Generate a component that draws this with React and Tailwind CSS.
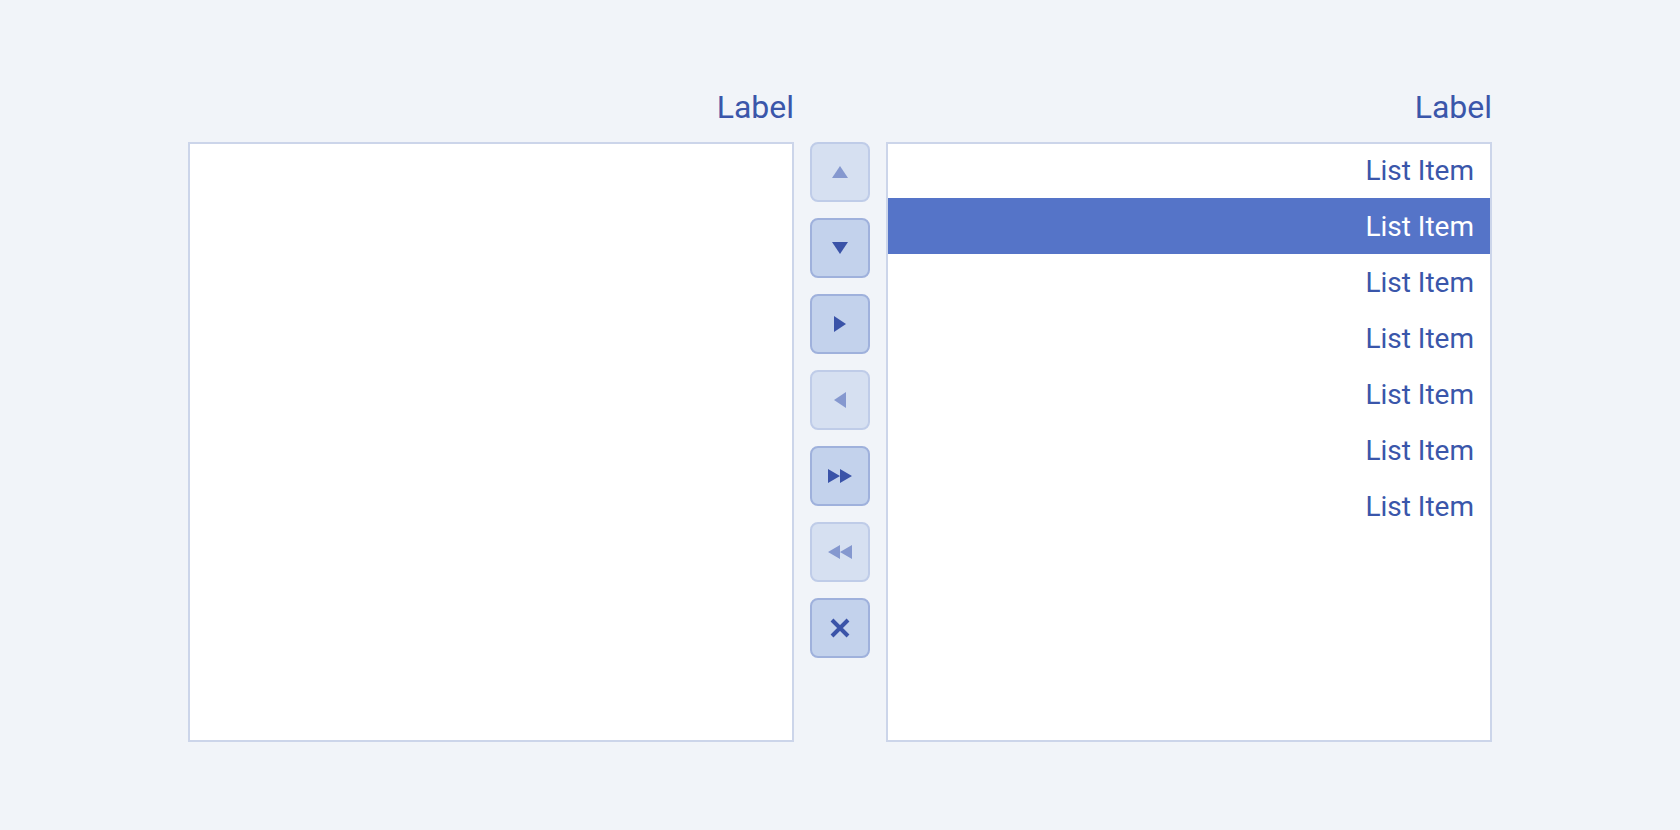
import React from "react";

const items = ["List Item", "List Item", "List Item", "List Item", "List Item", "List Item", "List Item"];

function Btn({ disabled, children }) {
  return (
    <button
      className={
        disabled
          ? "w-[60px] h-[60px] rounded-lg border-2 border-[#bfcce8] bg-[#d6e0f1] text-[#8598cf] flex items-center justify-center"
          : "w-[60px] h-[60px] rounded-lg border-2 border-[#9fb1dc] bg-[#c3d2ec] text-[#3a53a8] flex items-center justify-center"
      }
    >
      {children}
    </button>
  );
}

export default function App() {
  return (
    <div
      className="min-h-screen w-full bg-[#f1f4f9] flex items-start justify-center pt-[87px]"
      style={{ fontFamily: "Roboto, 'Liberation Sans', sans-serif" }}
    >
      <div className="grid grid-cols-[606px_60px_606px] gap-x-4 content-start">
        <div className="text-right text-[32px] leading-10 text-[#3a56aa] mb-[15px]">Label</div>
        <div />
        <div className="text-right text-[32px] leading-10 text-[#3a56aa] mb-[15px]">Label</div>

        <div className="h-[600px] border-2 border-[#ccd5ea] bg-white" />

        <div className="flex flex-col gap-4">
          <Btn disabled>
            <svg width="16" height="12" viewBox="0 0 16 12"><path d="M8 0 L16 12 L0 12 Z" fill="currentColor" /></svg>
          </Btn>
          <Btn>
            <svg width="16" height="12" viewBox="0 0 16 12"><path d="M0 0 L16 0 L8 12 Z" fill="currentColor" /></svg>
          </Btn>
          <Btn>
            <svg width="12" height="16" viewBox="0 0 12 16"><path d="M0 0 L12 8 L0 16 Z" fill="currentColor" /></svg>
          </Btn>
          <Btn disabled>
            <svg width="12" height="16" viewBox="0 0 12 16"><path d="M12 0 L0 8 L12 16 Z" fill="currentColor" /></svg>
          </Btn>
          <Btn>
            <svg width="24" height="14" viewBox="0 0 24 14"><path d="M0 0 L12 7 L0 14 Z M12 0 L24 7 L12 14 Z" fill="currentColor" /></svg>
          </Btn>
          <Btn disabled>
            <svg width="24" height="14" viewBox="0 0 24 14"><path d="M12 0 L0 7 L12 14 Z M24 0 L12 7 L24 14 Z" fill="currentColor" /></svg>
          </Btn>
          <Btn>
            <svg width="20" height="20" viewBox="0 0 20 20"><path d="M2 2 L18 18 M18 2 L2 18" stroke="currentColor" strokeWidth="4" /></svg>
          </Btn>
        </div>

        <div className="h-[600px] border-2 border-[#ccd5ea] bg-white">
          <div className="-mt-[2px]">
            {items.map((t, i) => (
              <div
                key={i}
                className={
                  i === 1
                    ? "h-14 flex items-center justify-end pr-4 pt-[2px] text-[28px] bg-[#5574c8] text-white"
                    : "h-14 flex items-center justify-end pr-4 pt-[2px] text-[28px] text-[#3a56aa]"
                }
              >
                {t}
              </div>
            ))}
          </div>
        </div>
      </div>
    </div>
  );
}
